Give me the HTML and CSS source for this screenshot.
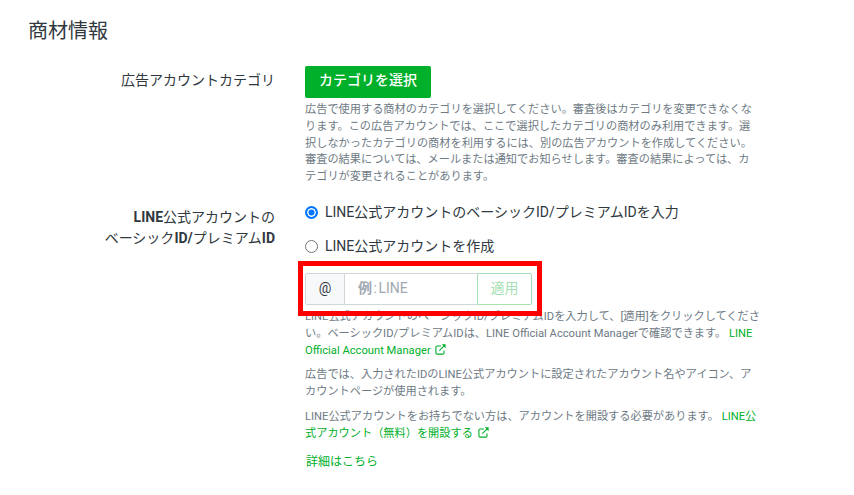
FILE: index.html
```html
<!DOCTYPE html>
<html lang="ja">
<head>
<meta charset="utf-8">
<title>商材情報</title>
<link rel="stylesheet" href="styles.css">
</head>
<body>
<main class="page">
  <h1 class="title">商材情報</h1>
  <section class="row row-category">
    <div class="label">広告アカウントカテゴリ</div>
    <div class="field">
      <button class="btn" type="button">カテゴリを選択</button>
      <p class="help">広告で使用する商材のカテゴリを選択してください。審査後はカテゴリを変更できなくな<br>ります。この広告アカウントでは、ここで選択したカテゴリの商材のみ利用できます。選<br>択しなかったカテゴリの商材を利用するには、別の広告アカウントを作成してください。<br>審査の結果については、メールまたは通知でお知らせします。審査の結果によっては、カ<br>テゴリが変更されることがあります。</p>
    </div>
  </section>
  <section class="row row-account">
    <div class="label label-bold"><b>LINE</b>公式アカウントの<br>ベーシック<b>ID/</b>プレミアム<b>ID</b></div>
    <div class="field">
      <label class="radio"><span class="dot dot-on"></span>LINE公式アカウントのベーシックID/プレミアムIDを入力</label>
      <label class="radio"><span class="dot"></span>LINE公式アカウントを作成</label>
      <div class="group">
        <span class="addon">@</span>
        <span class="input"><b class="rei">例</b><span class="colon">:</span>LINE</span>
        <span class="apply">適用</span>
        <span class="highlight"></span>
      </div>
      <p class="help help-id">LINE公式アカウントのベーシックID/プレミアムIDを入力して、[適用]をクリックしてくださ<br>い。ベーシックID/プレミアムIDは、LINE Official Account Managerで確認できます。 <a>LINE<br>Official Account Manager <svg class="ext" viewBox="0 0 12 12"><path d="M6.5 2.2H2.3Q1 2.2 1 3.5V9.7Q1 11 2.3 11H8.5Q9.8 11 9.8 9.7V7M4.7 7.3L10.3 1.7"/><path class="tip" d="M7.4.4H11.6V4.6Z"/></svg></a></p>
      <p class="help">広告では、入力されたIDのLINE公式アカウントに設定されたアカウント名やアイコン、ア<br>カウントページが使用されます。</p>
      <p class="help">LINE公式アカウントをお持ちでない方は、アカウントを開設する必要があります。 <a>LINE公<br>式アカウント（無料）を開設する <svg class="ext" viewBox="0 0 12 12"><path d="M6.5 2.2H2.3Q1 2.2 1 3.5V9.7Q1 11 2.3 11H8.5Q9.8 11 9.8 9.7V7M4.7 7.3L10.3 1.7"/><path class="tip" d="M7.4.4H11.6V4.6Z"/></svg></a></p>
      <a class="more">詳細はこちら</a>
    </div>
  </section>
</main>
</body>
</html>
```
FILE: styles.css
```css
* { box-sizing: border-box; }
body {
  margin: 0;
  background: #fff;
  color: #303840;
  font: 14px/21px Roboto, "Noto Sans CJK JP", sans-serif;
  white-space: nowrap;
  overflow: hidden;
}
.page { padding: 16px 0 0 29px; }
.title { margin: 0 0 0 -1px; font-size: 20px; line-height: 30px; font-weight: 400; }
.row { display: grid; grid-template-columns: 246px 1fr; column-gap: 30px; }
.row-category { margin-top: 20px; }
.row-account { margin-top: 10px; }
.label { text-align: right; padding-top: 4px; }
.label-bold b { font-weight: 700; }
.row-account .label { padding-top: 11px; }
.btn {
  display: block;
  width: 126px;
  height: 32px;
  padding: 0 0 3px;
  border: 0;
  border-radius: 2px;
  background: #00b02a;
  color: #fff;
  font: 500 14px/29px Roboto, "Noto Sans CJK JP", sans-serif;
}
.help { margin: 0 0 8px; font-size: 11.2px; line-height: 16.8px; color: #6e7a84; }
.row-category .help { margin: 4px 0 0; }
.help-id { margin-top: 4px; }
a { color: #00b02a; }
.radio { display: flex; align-items: center; height: 34px; }
.dot {
  width: 13px;
  height: 13px;
  margin-right: 7px;
  border: 1px solid #767676;
  border-radius: 50%;
}
.dot-on { border: 2px solid #0075ff; background: #0075ff; box-shadow: inset 0 0 0 1.5px #fff; }
.group { position: relative; display: flex; width: 227px; height: 32px; margin-top: 9px; line-height: 29px; }
.addon { width: 40px; border: 1px solid #d3d6d8; border-radius: 2px 0 0 2px; background: #f7f8fa; text-align: center; }
.input { width: 132px; padding-left: 13px; border: solid #d3d6d8; border-width: 1px 0; color: #a0a9b2; }
.rei { font-weight: 700; }
.colon { margin: 0 1.5px; }
.apply { width: 55px; border: 1px solid #a5dfb3; border-radius: 0 2px 2px 0; color: #a5dfb3; text-align: center; }
.highlight { position: absolute; left: -7px; top: -12px; width: 244px; height: 55px; border: 5px solid #f00; }
.ext { width: 11px; height: 11px; margin-left: 2px; vertical-align: -1px; overflow: visible; fill: none; stroke: #00b02a; stroke-width: 1.2; }
.tip { fill: #00b02a; stroke: none; }
.more { display: block; margin: 10px 0 0 1px; font-size: 12px; line-height: 18px; }
```
